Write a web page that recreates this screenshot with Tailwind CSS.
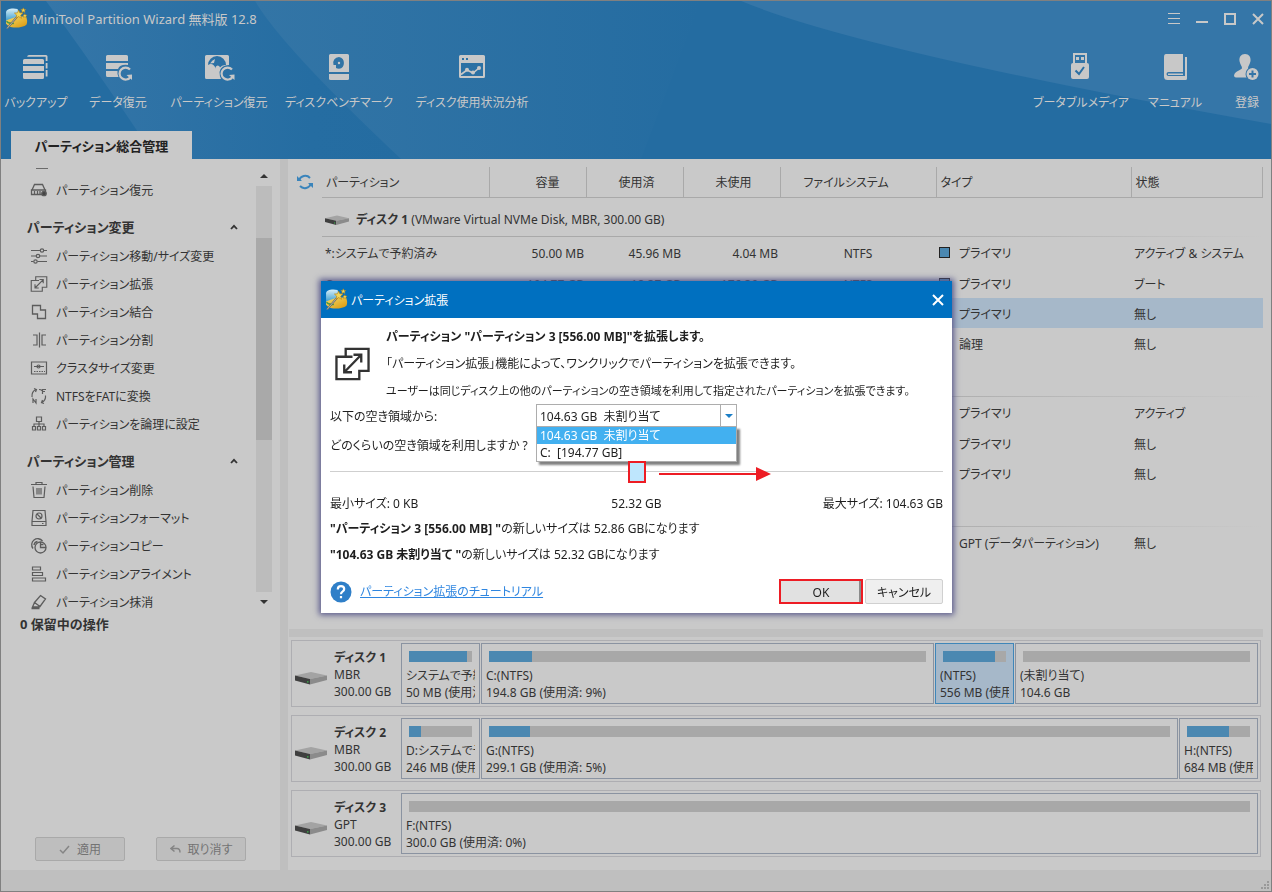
<!DOCTYPE html>
<html lang="ja">
<head>
<meta charset="utf-8">
<meta name="viewport" content="width=device-width, initial-scale=1">
<title>MiniTool Partition Wizard 無料版 12.8</title>
<script src="https://cdn.jsdelivr.net/npm/@tailwindcss/browser@4"></script>
</head>
<body class="font-['Noto_Sans','Noto_Sans_CJK_JP',sans-serif] [font-feature-settings:'palt'] text-xs leading-4 text-[#333333] whitespace-nowrap">

<!-- Shared artwork -->
<svg width="0" height="0" class="absolute" aria-hidden="true">
  <defs>
    <linearGradient id="gold" x1="0" y1="0" x2="1" y2="1"><stop offset="0" stop-color="#f6dc6a"/><stop offset="1" stop-color="#d9960c"/></linearGradient>
    <linearGradient id="glass" x1="0" y1="0" x2="0" y2="1"><stop offset="0" stop-color="#d5eef8"/><stop offset="1" stop-color="#3f9fce"/></linearGradient>
  </defs>
  <symbol id="logo" viewBox="0 0 22 22">
    <path d="M1 5c0-2 3-3.500 7-3.500l4 .5 2 8-13 3z" fill="url(#glass)"/>
    <path d="M1 13c3-2 7-2 10-4l9 0c1.500 3 1.500 6 .5 8-3 3-13 3.500-17 1.500L1 16z" fill="url(#gold)"/>
    <path d="M1.500 13.500c1 2 5 2.500 7 2" stroke="#4f9a4a" stroke-width="1.500" fill="none"/>
    <path d="M2 20.500 13.500 7" stroke="#6d6a5c" stroke-width="1.800"/>
    <path d="M2 20.500 13.500 7" stroke="#dcd9c8" stroke-width=".6"/>
    <path d="M13 3l1.200 2.600 3 .2-2.200 2 .8 3-2.800-1.600-2.500 1.600.7-3-2.200-2 2.900-.2z" fill="#f2d85b" stroke="#b98412" stroke-width=".6"/>
    <path d="M17.500 .8l.7 1.500 1.700.1-1.200 1.200.4 1.700-1.600-.9-1.400.9.300-1.700-1.200-1.200 1.600-.1zM19 6.500l.6 1.200 1.400.1-1 1 .3 1.400-1.300-.7-1.200.7.300-1.400-1-1 1.300-.1z" fill="#f2d85b" stroke="#b98412" stroke-width=".5"/>
  </symbol>
  <symbol id="drive" viewBox="0 0 32 14">
    <path d="M0 4.500 16 1l16 3.500L15 8z" fill="#a3a3a3"/>
    <path d="M0 4.500 15 8v5.500L0 9.500z" fill="#3f3f3f"/>
    <path d="M15 8l17-3.500V9l-17 4.500z" fill="#8b8b8b"/>
    <path d="M12 10.200h1.500v1.300H12z" fill="#3bb54a"/>
  </symbol>
  <symbol id="chev" viewBox="0 0 8 6"><path d="M1 5 4 1.800 7 5" fill="none" stroke="#333" stroke-width="1.800"/></symbol>
  <symbol id="extend" viewBox="0 0 36 34">
    <path d="M11 9V1.500h23.500V24H26M18 9.500H1.500v23H25V23" fill="none" stroke="currentColor" stroke-width="2.400"/>
    <path d="M9.500 25.500 27 7.500M19 7.500h8v8M9.500 17.500v8h8" fill="none" stroke="currentColor" stroke-width="2.400"/>
  </symbol>
</svg>

<div class="flex h-screen flex-col overflow-hidden border border-[#808080] bg-[#c9c9c9]">

  <!-- Title, toolbar and tab -->
  <header class="relative isolate flex h-[158px] shrink-0 flex-col bg-[#246ca1] text-[#c8c8c8]">
    <svg class="absolute inset-0 -z-10 h-full w-full" viewBox="0 0 1270 158" preserveAspectRatio="none" aria-hidden="true">
      <defs>
        <linearGradient id="h1" x1="0" y1="0" x2="1" y2="0"><stop offset="0" stop-color="#3576a8"/><stop offset=".75" stop-color="#256da2"/><stop offset="1" stop-color="#246ca1"/></linearGradient>
        <linearGradient id="h2" x1="0" y1="0" x2="1" y2="0"><stop offset="0" stop-color="#3375a6"/><stop offset="1" stop-color="#246ca1"/></linearGradient>
      </defs>
      <path d="M45 0Q90 60 155 158H400Q280 45 254 0z" fill="url(#h1)"/>
      <path d="M254 0Q280 45 400 158H640L700 0z" fill="url(#h2)"/>
      <path d="M740 0Q860 50 1270 123V0z" fill="#3576a8"/>
    </svg>
    <div class="flex h-[35px] items-center pl-1 pr-[7px]">
      <svg class="size-[23px]"><use href="#logo"/></svg>
      <h1 class="ml-1 flex-1 text-[13px]">MiniTool Partition Wizard 無料版 12.8</h1>
      <div class="flex items-center gap-4">
        <button aria-label="メニュー" class="size-3"><svg viewBox="0 0 12 12"><path d="M0 .5h12M0 5.500h12M0 10.500h12" stroke="#c8c8c8"/></svg></button>
        <button aria-label="最小化" class="size-3"><svg viewBox="0 0 12 12"><path d="M0 9h12" stroke="#c8c8c8" stroke-width="2"/></svg></button>
        <button aria-label="最大化" class="size-3"><svg viewBox="0 0 12 12"><path d="M1 1h10v10H1z" fill="none" stroke="#c8c8c8" stroke-width="2"/></svg></button>
        <button aria-label="閉じる" class="size-3"><svg viewBox="0 0 12 12"><path d="M1 1l10 10M11 1 1 11" stroke="#c8c8c8" stroke-width="2"/></svg></button>
      </div>
    </div>
    <div class="flex flex-1 items-start justify-between pl-[7px] pr-[10px] pt-[17px]">
      <div class="flex gap-[26px]">
        <button class="flex w-14 flex-col items-center gap-[14px]">
          <svg class="size-7" viewBox="0 0 28 28" fill="#c8c8c8"><path d="M5 3.500Q5.500 2 7 2h17q1.500 0 1.500 1.500V8h-1.800V3.800H6z"/><path d="M23.700 10h1.800v5.500h-1.800zM23.700 17h1.800v6.500h-1.800zM1 7.500Q1 6 2.500 6h18q1.500 0 1.500 1.500V11H1zM1 13h21v5H1zM1 20h21v4.500q0 1.500-1.500 1.500h-18Q1 26 1 24.500z"/></svg>
          <span>バックアップ</span>
        </button>
        <button class="flex w-14 flex-col items-center gap-[14px]">
          <svg class="size-7" viewBox="0 0 28 28" fill="#c8c8c8"><path d="M2 3.500Q2 2 3.500 2h19Q24 2 24 3.500V8H2zM2 10h22v2q-8-1-10 4H2zM2 18h11.500q-.5 3 1 6H3.500Q2 24 2 22.500z"/><path d="M26 16.500A6 6 0 1 0 26.500 24" fill="none" stroke="#c8c8c8" stroke-width="2.200"/><path d="M22.500 22l5.500-.5V27z"/></svg>
          <span>データ復元</span>
        </button>
        <button class="flex w-[94px] flex-col items-center gap-[14px]">
          <svg class="h-7 w-[31px]" viewBox="0 0 31 28" fill="#c8c8c8"><path fill-rule="evenodd" d="M1 3.500Q1 2 2.500 2h21Q25 2 25 3.500V12q-8 0-9.500 7 0 4 1.500 7H2.500Q1 26 1 24.500zM4 12a9 9 0 0 1 18 0q-4-.5-6 2.500a2.200 2.200 0 1 0-4 1.500Q9 9 4 12z"/><path d="M6 10.500Q8 7 11 6l-1 4q-2 0-4 .5z"/><path d="M28 16.500A6 6 0 1 0 28.500 24" fill="none" stroke="#c8c8c8" stroke-width="2.200"/><path d="M25 22l5.500-.5V27z"/></svg>
          <span>パーティション復元</span>
        </button>
        <button class="flex w-[94px] flex-col items-center gap-[14px]">
          <svg class="size-7" viewBox="0 0 28 28" fill="#c8c8c8"><path fill-rule="evenodd" d="M4 2.500Q4 1 5.500 1h17Q24 1 24 2.500V19H4zM14 4a6 6 0 0 0-5.500 8H11v3q1 .8 3 .8a6 6 0 0 0 0-11.800zm0 4.800a1.200 1.200 0 1 1 0 2.400 1.200 1.200 0 0 1 0-2.400z"/><path d="M4 21h20v4.500q0 1.500-1.500 1.500h-17Q4 27 4 25.500z"/></svg>
          <span>ディスクベンチマーク</span>
        </button>
        <button class="flex w-[120px] flex-col items-center gap-[14px]">
          <svg class="size-7" viewBox="0 0 28 28" fill="#c8c8c8"><path fill-rule="evenodd" d="M1 3.500Q1 2 2.500 2h23Q27 2 27 3.500v20q0 1.500-1.500 1.500h-23Q1 25 1 23.500zM3 10v13h22V10zM4 5v2h2V5zm4 0v2h2V5z"/><path d="M3 21.500 9 17l6 3 6-5" fill="none" stroke="#c8c8c8" stroke-width="1.600"/><circle cx="9" cy="16.800" r="2"/><circle cx="15" cy="19.500" r="2"/><circle cx="21" cy="15" r="2"/></svg>
          <span>ディスク使用状況分析</span>
        </button>
      </div>
      <div class="flex gap-[25px]">
        <button class="flex w-[88px] flex-col items-center gap-[14px]">
          <svg class="size-7" viewBox="0 0 28 28"><path d="M6 10V0h14v10z" fill="#c8c8c8"/><path d="M8 2h10v8H8z" fill="#3475a7"/><path d="M9 4h3v3H9zM14 4h3v3h-3z" fill="#c8c8c8"/><rect x="4" y="10" width="18" height="16" rx="2" fill="#c8c8c8"/><path d="M8.500 17.500l3.500 3.500 5-7" fill="none" stroke="#2a6fa4" stroke-width="2"/></svg>
          <span>ブータブルメディア</span>
        </button>
        <button class="flex w-[50px] flex-col items-center gap-[14px]">
          <svg class="size-7" viewBox="0 0 28 28" fill="#c8c8c8"><path d="M5 1h17v18H7.500q-2 0-2 2t2 2H24V4h2v21.500q0 1.500-1.500 1.500H6.500Q3 27 3 23.500V4q0-3 2-3z"/><path d="M7 20.500h15v1.500H7z"/></svg>
          <span>マニュアル</span>
        </button>
        <button class="ml-2 flex w-7 flex-col items-center gap-[14px]">
          <svg class="size-7" viewBox="0 0 28 28"><path d="M12 1c4 0 6 3 5.500 7-.3 3-2.500 5-2.500 7 0 1.500 3 2 6 4v5.500H3Q1 24.500 1 22.500c1-5 8-5.500 8-7.500s-2.200-4-2.500-7C6 4 8 1 12 1z" fill="#c8c8c8"/><circle cx="19.500" cy="21" r="7" fill="#3475a7"/><circle cx="19.500" cy="21" r="6" fill="#c8c8c8"/><path d="M19.500 17.500v7M16 21h7" stroke="#3475a7" stroke-width="2"/></svg>
          <span>登録</span>
        </button>
      </div>
    </div>
    <div class="absolute bottom-0 left-[10px] flex h-7 w-[181px] items-center justify-center bg-[#c9c9c9] pt-[2px] text-[13px] font-bold text-[#222]">パーティション総合管理</div>
  </header>

  <div class="flex min-h-0 flex-1">
    <!-- Action list -->
    <aside class="flex w-[279px] shrink-0 flex-col">
      <div class="flex h-[457px] pr-2 pt-px">
        <nav class="flex-1 overflow-hidden">
          <div class="flex h-4 items-start pl-[35px] pt-2"><span class="h-px w-3 bg-[#6b6b6b]"></span></div>
          <ul>
            <li><button class="flex h-7 items-center gap-2 pl-[29px]"><svg class="size-[18px]" viewBox="0 0 18 18" fill="none" stroke="#5c5c5c" stroke-width="1.300"><path d="M2 9 4.500 3.500h8L15 9M1.500 9h14v4.500h-14zM4.500 10v3M7.500 10v3M10 10v3"/><circle cx="14" cy="12.500" r="2.200" fill="#444"/></svg><span class="pt-[2px]">パーティション復元</span></button></li>
          </ul>
          <h2 class="flex h-[38px] items-center justify-between pl-[26px] pr-[18px] pt-2 text-[13px] font-bold">パーティション変更<svg class="h-[6px] w-2"><use href="#chev"/></svg></h2>
          <ul>
            <li><button class="flex h-7 items-center gap-2 pl-[29px]"><svg class="size-[18px]" viewBox="0 0 18 18" fill="none" stroke="#5c5c5c" stroke-width="1.200"><path d="M1 3.500h9M14 3.500h3M1 9h5M10 9h7M1 14.500h2.500M7.500 14.500H17"/><circle cx="12" cy="3.500" r="1.700"/><circle cx="8" cy="9" r="1.700"/><circle cx="5.500" cy="14.500" r="1.700"/></svg><span class="pt-[2px]">パーティション移動/サイズ変更</span></button></li>
            <li><button class="flex h-7 items-center gap-2 pl-[29px]"><svg class="h-4 w-[18px] text-[#5c5c5c]"><use href="#extend"/></svg><span class="pt-[2px]">パーティション拡張</span></button></li>
            <li><button class="flex h-7 items-center gap-2 pl-[29px]"><svg class="size-[18px]" viewBox="0 0 18 18" fill="none" stroke="#5c5c5c" stroke-width="1.300"><path d="M2.500 2.500h8v4.500h5v8.500H7.500V11h-5z"/></svg><span class="pt-[2px]">パーティション結合</span></button></li>
            <li><button class="flex h-7 items-center gap-2 pl-[29px]"><svg class="size-[18px]" viewBox="0 0 18 18" fill="none" stroke="#5c5c5c" stroke-width="1.200"><path d="M9.500 1.500v15M3 4h4v10H3M16 4h-4v10h4"/></svg><span class="pt-[2px]">パーティション分割</span></button></li>
            <li><button class="flex h-7 items-center gap-2 pl-[29px]"><svg class="size-[18px]" viewBox="0 0 18 18" fill="none" stroke="#5c5c5c" stroke-width="1.200"><path d="M1.500 3h15v12h-15zM4 7.500h10"/><circle cx="8.500" cy="7.500" r="1.500"/><path d="M4 12.500h11" stroke-dasharray="1.500 1"/></svg><span class="pt-[2px]">クラスタサイズ変更</span></button></li>
            <li><button class="flex h-7 items-center gap-2 pl-[29px]"><svg class="size-[18px]" viewBox="0 0 18 18" fill="none" stroke="#5c5c5c" stroke-width="1.200"><path d="M2 10Q1.500 4.500 6 2.500M4 1.500l2.500 1L5.500 5M9 2.500q2 0 3 1M15.500 8.500Q16 13 12 15.500M14 16.500l-2.500-.8 1-2.700M12.500 7V2.500H16M12.500 4.500h2.500M3 16v-4l3 4v-4"/></svg><span class="pt-[2px]">NTFSをFATに変換</span></button></li>
            <li><button class="flex h-7 items-center gap-2 pl-[29px]"><svg class="size-[18px]" viewBox="0 0 18 18" fill="none" stroke="#5c5c5c" stroke-width="1.200"><path d="M6.500 2h5v4.500h-5zM9 6.500v5M4 11.500V9h10v2.500M2.500 11.500h3V15h-3zM7.500 11.500h3V15h-3zM12.500 11.500h3V15h-3z"/></svg><span class="pt-[2px]">パーティションを論理に設定</span></button></li>
          </ul>
          <h2 class="flex h-[38px] items-center justify-between pl-[26px] pr-[18px] pt-2 text-[13px] font-bold">パーティション管理<svg class="h-[6px] w-2"><use href="#chev"/></svg></h2>
          <ul>
            <li><button class="flex h-7 items-center gap-2 pl-[29px]"><svg class="size-[18px]" viewBox="0 0 18 18" fill="none" stroke="#5c5c5c" stroke-width="1.200"><path d="M1 3.500h16M6 3.500V1.500h6v2M3 5.500l1 11h10l1-11M7 7v6.500M9 7v6.500M11 7v6.500"/></svg><span class="pt-[2px]">パーティション削除</span></button></li>
            <li><button class="flex h-7 items-center gap-2 pl-[29px]"><svg class="size-[18px]" viewBox="0 0 18 18" fill="none" stroke="#5c5c5c" stroke-width="1.200"><path d="M3 1.500h12l1 11v4H2v-4zM2 12.500h14"/><circle cx="9" cy="7" r="3"/><path d="M7 5l4 4M12 14.500h1.500"/></svg><span class="pt-[2px]">パーティションフォーマット</span></button></li>
            <li><button class="flex h-7 items-center gap-2 pl-[29px]"><svg class="size-[18px]" viewBox="0 0 18 18" fill="none" stroke="#5c5c5c" stroke-width="1.300"><path d="M3 11.500A5.500 5.500 0 1 1 12.500 4M4 8Q4.500 5 7.500 4.500"/><circle cx="10.500" cy="10.500" r="5.500"/><path d="M10.500 5v5.500H16M10.500 7.500h3"/></svg><span class="pt-[2px]">パーティションコピー</span></button></li>
            <li><button class="flex h-7 items-center gap-2 pl-[29px]"><svg class="size-[18px]" viewBox="0 0 18 18" fill="none" stroke="#5c5c5c" stroke-width="1.200"><path d="M2.500 2h8v3h-8zM2.500 7.500h10v3h-10zM2.500 13h13v3h-13z"/></svg><span class="pt-[2px]">パーティションアライメント</span></button></li>
            <li><button class="flex h-7 items-center gap-2 pl-[29px]"><svg class="size-[18px]" viewBox="0 0 18 18" fill="none" stroke="#5c5c5c" stroke-width="1.300"><path d="M10.500 2.500 15.500 6 10 13.500 4.500 9.500zM4.500 9.500 2.500 14h6.500l1-.5M1.500 15.500h8"/></svg><span class="pt-[2px]">パーティション抹消</span></button></li>
          </ul>
        </nav>
        <div class="flex w-4 flex-col items-center pt-[14px]">
          <svg class="h-1 w-2" viewBox="0 0 8 4"><path d="M4 0l4 4H0z" fill="#333"/></svg>
          <div class="mt-2 h-[406px] w-full bg-[#bcbcbc] pt-[52px]"><div class="h-[202px] bg-[#a9a9a9]"></div></div>
          <svg class="mt-2 h-1 w-2" viewBox="0 0 8 4"><path d="M4 4 0 0h8z" fill="#333"/></svg>
        </div>
      </div>
      <p class="pl-[19px] text-[13px] font-bold">0 保留中の操作</p>
      <div class="mt-auto flex gap-[31px] pb-[9px] pl-[34px]">
        <button disabled class="flex h-6 w-[90px] items-center justify-center gap-[7px] rounded-xs border border-[#a9a9a9] bg-[#bebebe] pt-px text-[#737373]"><svg class="size-[11px]" viewBox="0 0 11 11"><path d="M1 6l3 3 6-7" fill="none" stroke="#858585" stroke-width="1.500"/></svg>適用</button>
        <button disabled class="flex h-6 w-[90px] items-center justify-center gap-[7px] rounded-xs border border-[#a9a9a9] bg-[#bebebe] pt-px text-[#737373]"><svg class="size-[11px]" viewBox="0 0 11 11"><path d="M4.500 1.500 1 4.500l3.500 3M1.500 4.500H7q3 0 3 4" fill="none" stroke="#858585" stroke-width="1.500"/></svg>取り消す</button>
      </div>
    </aside>
    <div class="w-2 shrink-0 bg-[#bfbfbf]"></div>

    <!-- Partition table and disk map -->
    <main class="flex min-w-0 flex-1 flex-col">
      <div class="flex h-[470px] items-start gap-[9px] overflow-hidden pl-[9px] pr-2 pt-2">
        <button aria-label="更新" class="mt-[7px] size-4"><svg viewBox="0 0 16 16" fill="none" stroke="#3a84bb" stroke-width="2"><path d="M2 6.500A6.500 6.500 0 0 1 13 4M14 9.500A6.500 6.500 0 0 1 3 12"/><path d="M0 2v5h5zM16 14V9h-5z" fill="#3a84bb" stroke="none"/></svg></button>
        <table class="flex-1 table-fixed border-collapse text-left [&_td:not([colspan='7'])]:pt-[3px]">
          <colgroup><col class="w-[167px]"><col class="w-[97px]"><col class="w-[97px]"><col class="w-[97px]"><col class="w-[156px]"><col class="w-[195px]"><col></colgroup>
          <thead>
            <tr class="h-[30px] border-b border-[#a9a9a9] *:border-r *:border-[#a9a9a9] *:pt-[3px] *:font-normal">
              <th class="pl-1">パーティション</th><th class="pl-5 text-center">容量</th><th class="pl-1 text-center">使用済</th><th class="pl-1 text-center">未使用</th><th class="pr-6 text-center">ファイルシステム</th><th class="pl-1">タイプ</th><th class="pl-1">状態</th>
            </tr>
          </thead>
          <tbody>
            <tr class="h-[39px]"><td colspan="7" class="pl-[3px] pt-[6px]"><div class="flex items-center gap-[7px]"><svg class="h-3 w-6"><use href="#drive"/></svg><span><b>ディスク 1</b> (VMware Virtual NVMe Disk, MBR, 300.00 GB)</span></div></td></tr>
            <tr class="h-px"><td colspan="7" class="h-px bg-linear-to-r from-[#a9a9a9] from-60% to-[#c9c9c9] p-0"></td></tr>
            <tr class="h-[31px]"><td class="pl-[3px]">*:システムで予約済み</td><td class="pr-[2px] text-right">50.00 MB</td><td class="pr-[2px] text-right">45.96 MB</td><td class="pr-[2px] text-right">4.04 MB</td><td class="text-center">NTFS</td><td class="pl-[3px]"><span class="mr-[9px] inline-block size-[11px] border border-[#222] bg-[#4b88b1]"></span>プライマリ</td><td class="pl-[3px]">アクティブ &amp; システム</td></tr>
            <tr class="h-[30px]"><td class="pl-[3px]">C:</td><td class="pr-[2px] text-right">194.77 GB</td><td class="pr-[2px] text-right">18.37 GB</td><td class="pr-[2px] text-right">176.39 GB</td><td class="text-center">NTFS</td><td class="pl-[3px]"><span class="mr-[9px] inline-block size-[11px] border border-[#222] bg-[#4b88b1]"></span>プライマリ</td><td class="pl-[3px]">ブート</td></tr>
            <tr class="h-[30px] bg-[#a6b8c9]"><td colspan="5"></td><td class="pl-[23px]">プライマリ</td><td class="pl-[3px]">無し</td></tr>
            <tr class="h-[30px]"><td colspan="5"></td><td class="pl-[23px]">論理</td><td class="pl-[3px]">無し</td></tr>
            <tr class="h-[38px]"><td colspan="7"></td></tr>
            <tr class="h-px"><td colspan="7" class="h-px bg-linear-to-r from-[#a9a9a9] from-60% to-[#c9c9c9] p-0"></td></tr>
            <tr class="h-[31px]"><td colspan="5"></td><td class="pl-[23px]">プライマリ</td><td class="pl-[3px]">アクティブ</td></tr>
            <tr class="h-[30px]"><td colspan="5"></td><td class="pl-[23px]">プライマリ</td><td class="pl-[3px]">無し</td></tr>
            <tr class="h-[30px]"><td colspan="5"></td><td class="pl-[23px]">プライマリ</td><td class="pl-[3px]">無し</td></tr>
            <tr class="h-[38px]"><td colspan="7"></td></tr>
            <tr class="h-px"><td colspan="7" class="h-px bg-linear-to-r from-[#a9a9a9] from-60% to-[#c9c9c9] p-0"></td></tr>
            <tr class="h-[31px]"><td colspan="5"></td><td class="pl-[23px]">GPT (データパーティション)</td><td class="pl-[3px]">無し</td></tr>
          </tbody>
        </table>
      </div>
      <div class="ml-px mr-2 h-2 shrink-0 bg-[#bfbfbf]"></div>

      <div class="flex flex-col gap-2 pl-[3px] pr-[10px] pt-[3px]">
        <section class="flex h-[67px] border border-[#aeaeb2] p-[2px]">
          <div class="flex w-[107px] shrink-0 items-center gap-[7px] pl-[1px]"><svg class="mt-2 h-[14px] w-8"><use href="#drive"/></svg><div class="pt-[2px] leading-[17px]"><b>ディスク 1</b><br>MBR<br>300.00 GB</div></div>
          <div class="flex min-w-0 flex-1 gap-[1px]">
            <div class="w-[79px] border border-[#8a93a1] px-1 pt-[7px]"><div class="mx-[3px] h-[11px] bg-[#a8a8a8]"><div class="h-full bg-[#4b88b1]" style="width:92%"></div></div><div class="mt-[5px] overflow-hidden leading-[17px]">システムで予約済み<br>50 MB (使用済: 91%)</div></div>
            <div class="min-w-0 flex-[443] border border-[#8a93a1] px-1 pt-[7px]"><div class="mx-[3px] h-[11px] bg-[#a8a8a8]"><div class="h-full bg-[#4b88b1]" style="width:9.8%"></div></div><div class="mt-[5px] overflow-hidden leading-[17px]">C:(NTFS)<br>194.8 GB (使用済: 9%)</div></div>
            <div class="w-[79px] border border-[#3f86b9] bg-[#a6b8c9] px-1 pt-[7px]"><div class="mx-[3px] h-[11px] bg-[#a8a8a8]"><div class="h-full bg-[#4b88b1]" style="width:82.5%"></div></div><div class="mt-[5px] overflow-hidden leading-[17px]">(NTFS)<br>556 MB (使用済: 82%)</div></div>
            <div class="min-w-0 flex-[233] border border-[#8a93a1] px-1 pt-[7px]"><div class="mx-[3px] h-[11px] bg-[#a8a8a8]"></div><div class="mt-[5px] overflow-hidden leading-[17px]">(未割り当て)<br>104.6 GB</div></div>
          </div>
        </section>
        <section class="flex h-[67px] border border-[#aeaeb2] p-[2px]">
          <div class="flex w-[107px] shrink-0 items-center gap-[7px] pl-[1px]"><svg class="mt-2 h-[14px] w-8"><use href="#drive"/></svg><div class="pt-[2px] leading-[17px]"><b>ディスク 2</b><br>MBR<br>300.00 GB</div></div>
          <div class="flex min-w-0 flex-1 gap-[1px]">
            <div class="w-[79px] border border-[#8a93a1] px-1 pt-[7px]"><div class="mx-[3px] h-[11px] bg-[#a8a8a8]"><div class="h-full bg-[#4b88b1]" style="width:19%"></div></div><div class="mt-[5px] overflow-hidden leading-[17px]">D:システムで予約済み<br>246 MB (使用済: 19%)</div></div>
            <div class="min-w-0 flex-1 border border-[#8a93a1] px-1 pt-[7px]"><div class="mx-[3px] h-[11px] bg-[#a8a8a8]"><div class="h-full bg-[#4b88b1]" style="width:6%"></div></div><div class="mt-[5px] overflow-hidden leading-[17px]">G:(NTFS)<br>299.1 GB (使用済: 5%)</div></div>
            <div class="w-[79px] border border-[#8a93a1] px-1 pt-[7px]"><div class="mx-[3px] h-[11px] bg-[#a8a8a8]"><div class="h-full bg-[#4b88b1]" style="width:66.7%"></div></div><div class="mt-[5px] overflow-hidden leading-[17px]">H:(NTFS)<br>684 MB (使用済: 66%)</div></div>
          </div>
        </section>
        <section class="flex h-[67px] border border-[#aeaeb2] p-[2px]">
          <div class="flex w-[107px] shrink-0 items-center gap-[7px] pl-[1px]"><svg class="mt-2 h-[14px] w-8"><use href="#drive"/></svg><div class="pt-[2px] leading-[17px]"><b>ディスク 3</b><br>GPT<br>300.00 GB</div></div>
          <div class="min-w-0 flex-1 border border-[#8a93a1] px-1 pt-[7px]"><div class="mx-[3px] h-[11px] bg-[#a8a8a8]"></div><div class="mt-[5px] overflow-hidden leading-[17px]">F:(NTFS)<br>300.0 GB (使用済: 0%)</div></div>
        </section>
      </div>
    </main>
  </div>
  <footer class="flex h-[21px] shrink-0 items-end justify-end bg-[#bfbfbf] p-[2px]">
    <svg class="size-2" viewBox="0 0 8 8" fill="#999"><path d="M6 0h2v2H6zM3 3h2v2H3zM6 3h2v2H6zM0 6h2v2H0zM3 6h2v2H3zM6 6h2v2H6z"/></svg>
  </footer>
</div>

<!-- Extend partition dialog -->
<div class="fixed inset-0 flex items-center justify-center pl-px pt-[2px]">
  <div role="dialog" aria-labelledby="dlg-title" class="w-[631px] bg-white text-[#1e1e1e] shadow-[0_0_6px_2px_#5a5a8c]">
    <div class="flex h-[37px] items-center bg-[#0070c0] pl-1 pr-2 text-white">
      <svg class="size-[23px]"><use href="#logo"/></svg>
      <h2 id="dlg-title" class="ml-[3px] flex-1 pt-[2px]">パーティション拡張</h2>
      <button aria-label="閉じる" class="size-3"><svg viewBox="0 0 12 12"><path d="M1 1l10 10M11 1 1 11" stroke="#fff" stroke-width="2"/></svg></button>
    </div>
    <div class="px-[9px] pb-[9px] pt-[5px]">
      <div class="flex gap-4 pl-[5px]">
        <svg class="mt-6 h-[34px] w-[35px] shrink-0 text-[#333]"><use href="#extend"/></svg>
        <div class="leading-[27px]">
          <p class="font-bold">パーティション "パーティション 3 [556.00 MB]"を拡張します。</p>
          <p>「パーティション拡張」機能によって、ワンクリックでパーティションを拡張できます。</p>
          <p class="text-[11px] leading-[27px]">ユーザーは同じディスク上の他のパーティションの空き領域を利用して指定されたパーティションを拡張できます。</p>
        </div>
      </div>
      <div class="flex h-[23px] items-center">
        <label for="src" class="w-[206px] pt-[3px]">以下の空き領域から:</label>
        <div class="relative w-[201px]">
          <select id="src" class="block h-[23px] w-full appearance-none border border-[#adadad] bg-white pl-[3px] pt-[2px]"><option>104.63 GB&nbsp; 未割り当て</option><option>C:&nbsp; [194.77 GB]</option></select>
          <span class="pointer-events-none absolute inset-y-0 right-0 flex w-[17px] items-center justify-center border border-[#adadad]"><svg class="h-1 w-2" viewBox="0 0 8 4"><path d="M0 0h8L4 4z" fill="#1c7fc7"/></svg></span>
          <ul role="listbox" aria-label="空き領域" class="absolute left-0 top-[22px] z-10 w-full border border-[#adadad] bg-white leading-4 shadow-[3px_3px_2px_#808080]">
            <li role="option" aria-selected="true" class="bg-[#42b0f0] pl-[3px] pt-px text-white">104.63 GB&nbsp; 未割り当て</li>
            <li role="option" aria-selected="false" class="pl-[3px] pt-px">C:&nbsp; [194.77 GB]</li>
          </ul>
        </div>
      </div>
      <label for="amount" class="flex h-[33px] items-center pt-1">どのくらいの空き領域を利用しますか ?</label>
      <div class="relative h-6">
        <input id="amount" type="range" min="0" max="100" value="50" class="relative z-20 block h-6 w-full appearance-none bg-transparent [&::-webkit-slider-thumb]:h-[22px] [&::-webkit-slider-thumb]:w-[18px] [&::-webkit-slider-thumb]:appearance-none [&::-webkit-slider-thumb]:border-2 [&::-webkit-slider-thumb]:border-[#ed1c24] [&::-webkit-slider-thumb]:bg-[#bee6fd]">
        <span class="absolute inset-x-0 top-[11px] h-px bg-[#cfcfcf]"></span>
        <svg class="absolute left-[329px] top-[7px] z-20 h-[14px] w-[112px]" viewBox="0 0 112 14" aria-hidden="true"><path d="M0 6h97V0l15 7-15 7V8H0z" fill="#ed1c24"/></svg>
      </div>
      <div class="mt-3 flex h-[18px] items-center justify-between pb-[2px]"><span class="w-32">最小サイズ: 0 KB</span><span>52.32 GB</span><span class="w-32 text-right">最大サイズ: 104.63 GB</span></div>
      <p class="mt-[7px]"><b>"パーティション 3 [556.00 MB] "</b>の新しいサイズは 52.86 GBになります</p>
      <p class="mt-[10px]"><b>"104.63 GB 未割り当て "</b>の新しいサイズは 52.32 GBになります</p>
      <div class="mt-4 flex h-[25px] items-center">
        <svg class="size-[22px]" viewBox="0 0 22 22"><circle cx="11" cy="11" r="10.500" fill="#2f7fc8"/><path d="M7.800 8.500q0-3.300 3.200-3.300t3.200 2.900q0 1.500-1.700 2.500Q11 11.500 11 13.200M11 15v2.200" fill="none" stroke="#fff" stroke-width="2.200"/></svg>
        <a href="#" class="ml-2 flex-1 text-[#2f86e0] underline">パーティション拡張のチュートリアル</a>
        <button class="h-[25px] w-[84px] border-2 border-[#ed1c24] bg-[#e1e1e1] pt-[2px] shadow-[inset_-2px_0_0_#8a8a8a]">OK</button>
        <button class="ml-[2px] h-[25px] w-[78px] rounded-xs border border-[#d0d0d0] bg-[#efefef] pt-[2px]">キャンセル</button>
      </div>
    </div>
  </div>
</div>
</body>
</html>
